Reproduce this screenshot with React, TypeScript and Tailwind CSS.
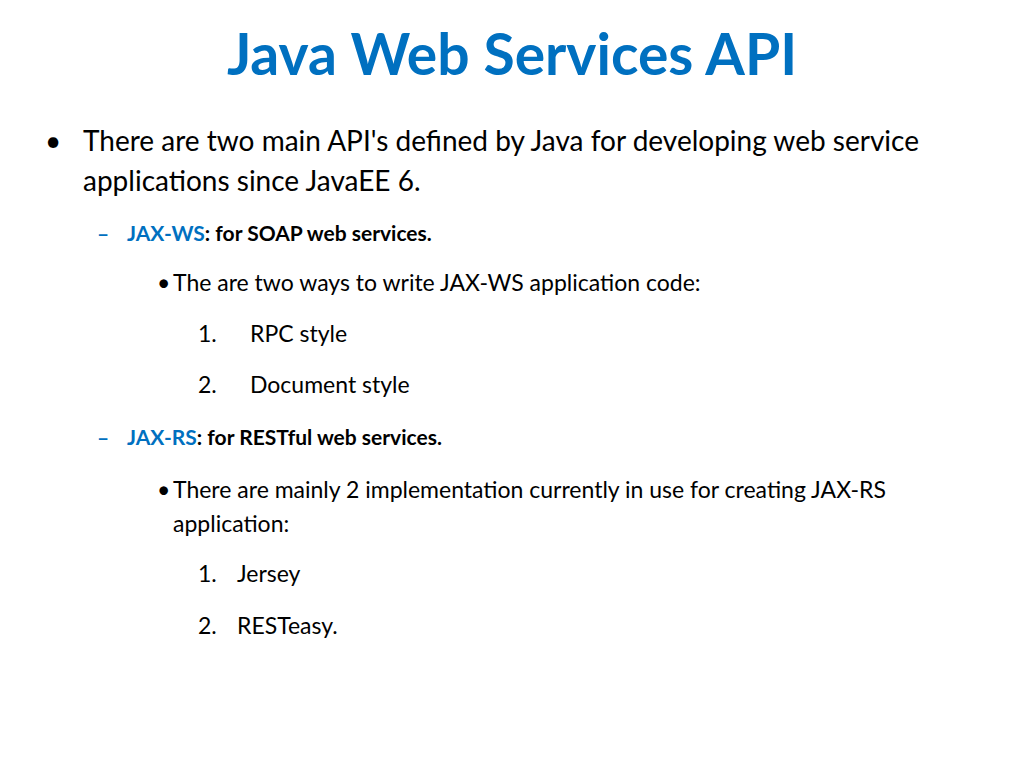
export default function App() {
  const f = { fontFamily: "Lato, 'Open Sans', sans-serif" };
  return (
    <div className="w-[1024px] h-[768px] bg-white text-black relative overflow-hidden" style={f}>
      <h1 className="text-center text-[57px] font-bold text-[#0070C0] leading-none pt-[25px]">Java Web Services API</h1>
      <div className="mt-[38px] pl-[45px]">
        <div className="flex text-[28px] leading-[40px]">
          <span className="w-[38px]">•</span>
          <span className="w-[845px]">There are two main API's defined by Java for developing web service applications since JavaEE 6.</span>
        </div>
        <div className="flex text-[21px] font-bold mt-[18px] pl-[52px] leading-[30px]">
          <span className="w-[30px] text-[#0070C0]">–</span>
          <span><span className="text-[#0070C0]">JAX-WS</span>: for SOAP web services.</span>
        </div>
        <div className="flex text-[23px] mt-[18px] pl-[112px] leading-[32px]">
          <span className="w-[16px]">•</span>
          <span>The are two ways to write JAX-WS application code:</span>
        </div>
        <div className="flex text-[23px] mt-[19px] pl-[153px] leading-[32px]"><span className="w-[52px]">1.</span><span>RPC style</span></div>
        <div className="flex text-[23px] mt-[19px] pl-[153px] leading-[32px]"><span className="w-[52px]">2.</span><span>Document style</span></div>
        <div className="flex text-[21px] font-bold mt-[22px] pl-[52px] leading-[30px]">
          <span className="w-[30px] text-[#0070C0]">–</span>
          <span><span className="text-[#0070C0]">JAX-RS</span>: for RESTful web services.</span>
        </div>
        <div className="flex text-[23px] mt-[20px] pl-[112px] leading-[34px]">
          <span className="w-[16px]">•</span>
          <span className="w-[760px]">There are mainly 2 implementation currently in use for creating JAX-RS application:</span>
        </div>
        <div className="flex text-[23px] mt-[17px] pl-[153px] leading-[32px]"><span className="w-[39px]">1.</span><span>Jersey</span></div>
        <div className="flex text-[23px] mt-[20px] pl-[153px] leading-[32px]"><span className="w-[39px]">2.</span><span>RESTeasy.</span></div>
      </div>
    </div>
  );
}
